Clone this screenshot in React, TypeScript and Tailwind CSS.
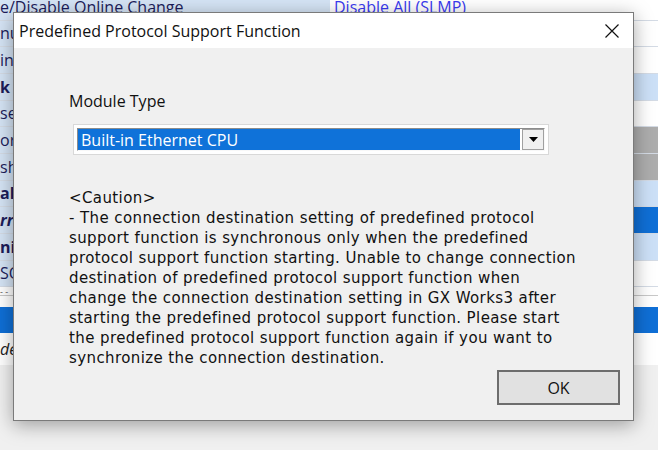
const rows = [
  { name: "e/Disable Online Change", value: "Disable All (SLMP)", right: "bg-white", link: true },
  { name: "nu", right: "bg-white" },
  { name: "in", right: "bg-white" },
  { name: "k", bold: true, right: "bg-[#cce0f7]" },
  { name: "se", right: "bg-white" },
  { name: "or", right: "bg-[#adadad]" },
  { name: "sh", right: "bg-[#adadad]" },
  { name: "al", bold: true, right: "bg-[#cce0f7]" },
  { name: "rr", bold: true, italic: true, right: "bg-[#0f6fd6]" },
  { name: "ni", bold: true, right: "bg-[#cce0f7]" },
  { name: "SO", right: "bg-white" },
]

const cautionLines = [
  "<Caution>",
  "- The connection destination setting of predefined protocol",
  "support function is synchronous only when the predefined",
  "protocol support function starting. Unable to change connection",
  "destination of predefined protocol support function when",
  "change the connection destination setting in GX Works3 after",
  "starting the predefined protocol support function. Please start",
  "the predefined protocol support function again if you want to",
  "synchronize the connection destination.",
]

function Background() {
  return (
    <div className="flex flex-col -mt-[6px] font-['Open_Sans',sans-serif] text-[16px]">
      {rows.map((r, i) => (
        <div key={i} className="flex h-[26.67px] border-b border-[#d4dbe5]">
          <div
            className={`w-[330px] flex items-center bg-[#d5e4f5] text-[#1c1c5a] whitespace-nowrap overflow-hidden ${
              r.bold ? "font-bold" : ""
            } ${r.italic ? "italic" : ""}`}
          >
            {r.name}
          </div>
          <div className={`flex-1 flex items-center pl-[4px] ${r.right}`}>
            {r.value && <span className="text-[#3a3af0] underline">{r.value}</span>}
          </div>
        </div>
      ))}
      <div className="h-[9px] flex items-center overflow-hidden bg-white text-[#555] text-[9px] leading-none border-b border-[#c8c8c8]">- -</div>
      <div className="h-[11px] bg-white" />
      <div className="h-[26px] bg-[#0f6fd6]" />
      <div className="h-[32px] flex items-center bg-white italic text-[#222]">de</div>
      <div className="flex-1 h-[80px] bg-[#f0f0f0]" />
    </div>
  )
}

export default function App() {
  return (
    <div className="relative w-[658px] h-[450px] overflow-hidden bg-[#f0f0f0]">
      <Background />

      <div className="absolute left-[13px] top-[12px] w-[621px] h-[409px] flex flex-col border border-[#7a7a7a] bg-[#f0f0f0] shadow-[0_4px_18px_rgba(0,0,0,0.35)]">
        <div className="h-[35px] flex items-center justify-between bg-white pl-[5px] pr-[14px] font-['Open_Sans',sans-serif] text-[16px] text-[#111]">
          <span>Predefined Protocol Support Function</span>
          <svg width="14" height="14" viewBox="0 0 14 14">
            <path d="M0.5 0.5 L13.5 13.5 M13.5 0.5 L0.5 13.5" stroke="#111" strokeWidth="1.2" />
          </svg>
        </div>

        <div className="flex-1 flex flex-col pl-[55px] pt-[43px] relative">
          <div className="font-['Open_Sans',sans-serif] text-[16px] leading-[20px] text-[#111]">Module Type</div>

          <div className="mt-[13px] w-[476px] h-[31px] p-[3px] border border-[#d8d8d8] bg-white ml-[4px]">
            <div className="h-full flex border-t border-l border-[#8c8c8c] border-r border-b border-r-[#f8f8f8] border-b-[#f8f8f8]">
              <div className="flex-1 flex items-center bg-[#0f72d9] pl-[3px] font-['Open_Sans',sans-serif] text-[16px] text-white">
                Built-in Ethernet CPU
              </div>
              <div className="w-[22px] ml-[2px] flex items-center justify-center bg-[#f0f0f0] border border-[#a0a0a0]">
                <svg width="9" height="5" viewBox="0 0 9 5">
                  <path d="M0 0 H9 L4.5 5 Z" fill="#000" />
                </svg>
              </div>
            </div>
          </div>

          <div className="mt-[33px] font-['DejaVu_Sans',sans-serif] text-[15px] tracking-[0.4px] leading-[20px] text-[#111] whitespace-nowrap">
            {cautionLines.map((l, i) => (
              <div key={i}>{l}</div>
            ))}
          </div>

          <div className="absolute right-[13px] bottom-[15px] w-[123px] h-[35px] flex items-center justify-center border-2 border-[#6d6d6d] bg-[#e1e1e1] font-['Open_Sans',sans-serif] text-[16px] text-[#111]">
            OK
          </div>
        </div>
      </div>
    </div>
  )
}
